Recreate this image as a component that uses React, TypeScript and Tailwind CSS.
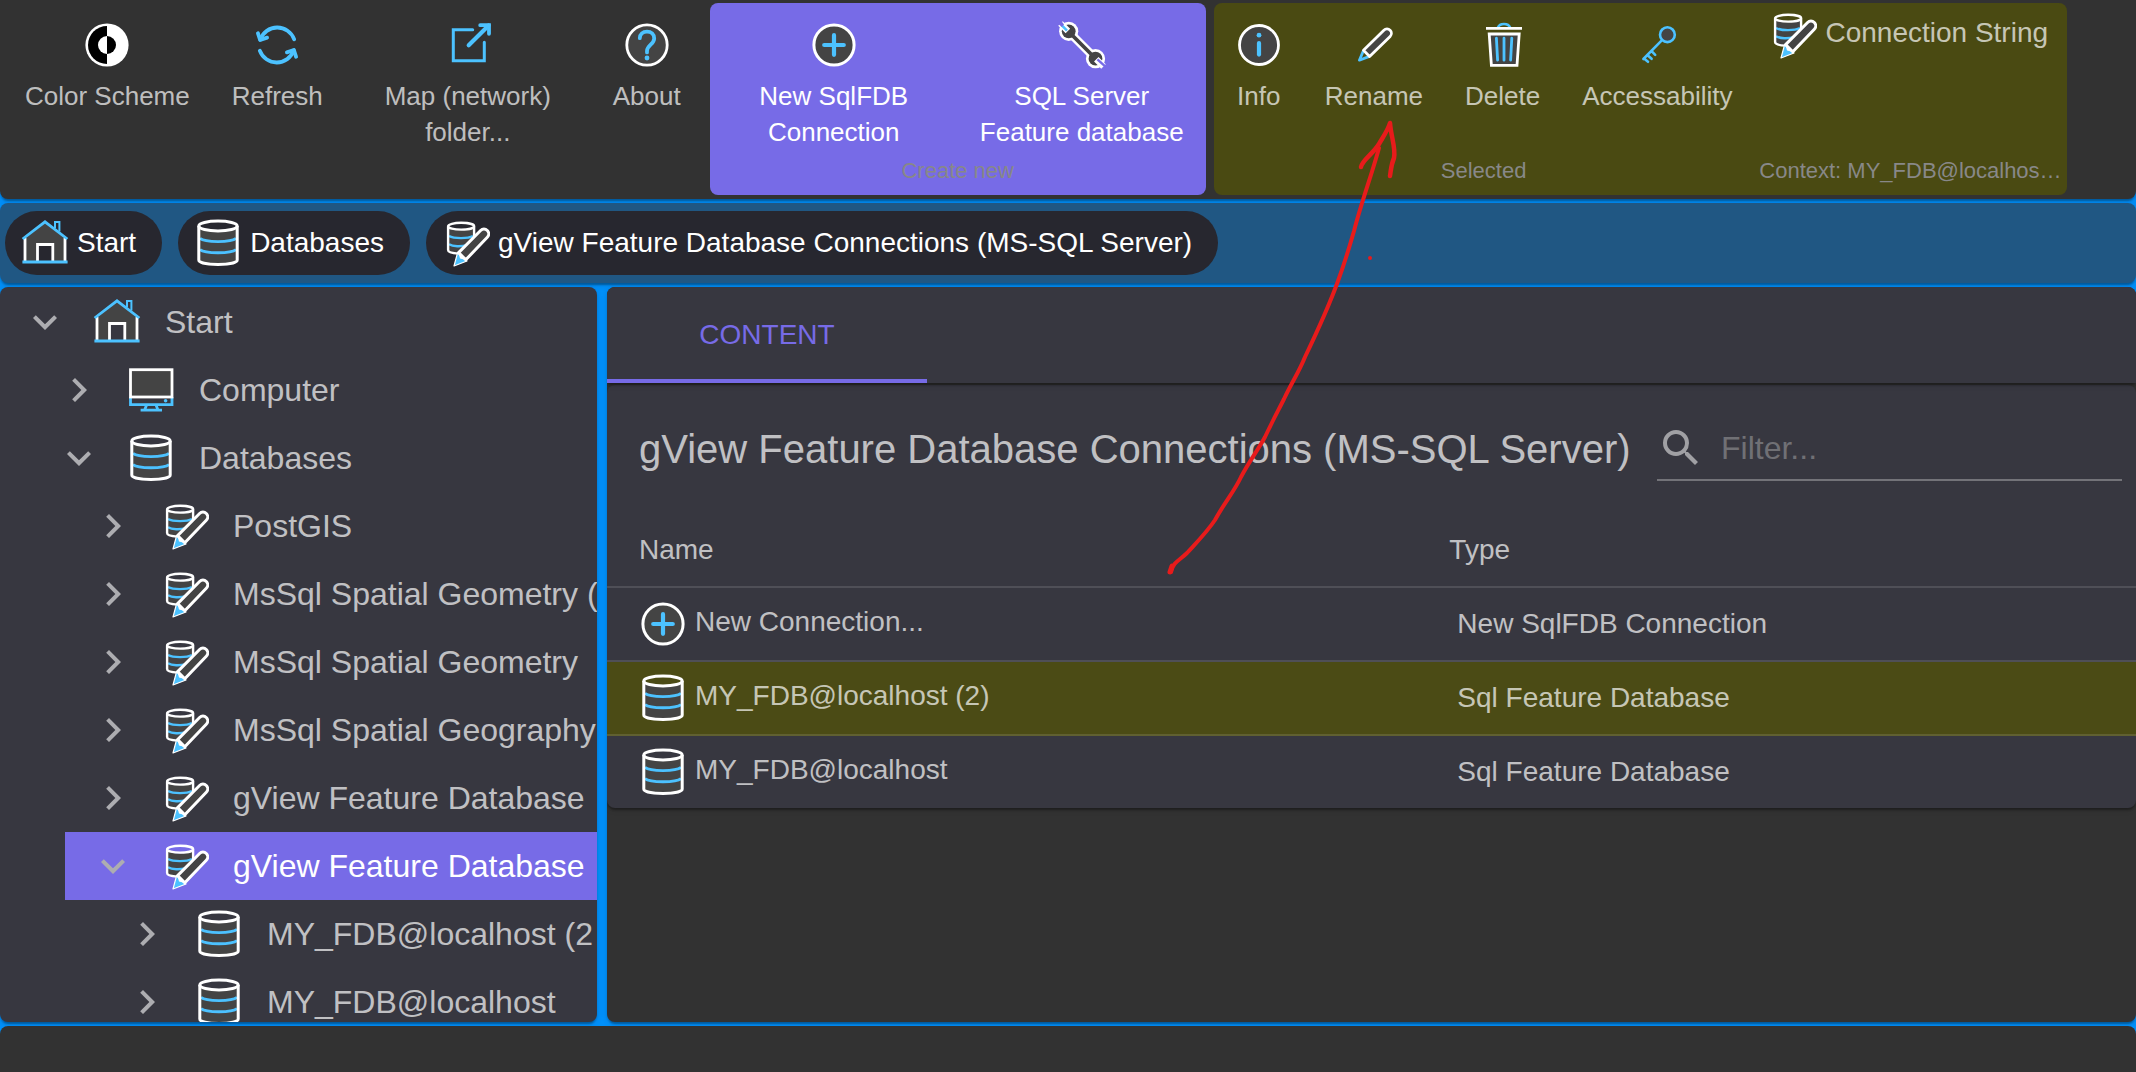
import { useState } from 'react'
import type { ReactNode } from 'react'
import { clsx } from 'clsx'

const paper =
  'shadow-[0_4px_2px_-2px_rgba(0,0,0,0.2),0_2px_2px_rgba(0,0,0,0.14),0_2px_6px_rgba(0,0,0,0.12)]'

const BLUE = '#4cc2ff'
const DARK = '#444444'

function Icon({ children, className }: { children: ReactNode; className?: string }) {
  return (
    <svg
      viewBox="0 0 48 48"
      fill="none"
      aria-hidden="true"
      className={clsx('h-12 w-12 shrink-0', className)}
    >
      {children}
    </svg>
  )
}

function ColorSchemeIcon() {
  return (
    <Icon>
      <circle cx="24" cy="24" r="21.6" fill="#fff" />
      <path d="M24 5a19 19 0 0 0 0 38z" fill="#000" />
      <path d="M24 15a9 9 0 0 0 0 18z" fill="#fff" />
      <path d="M24 15a9 9 0 0 1 0 18z" fill="#000" />
    </Icon>
  )
}

function RefreshIcon() {
  return (
    <Icon>
      <g stroke={BLUE} strokeWidth="3.8" strokeLinecap="round" strokeLinejoin="round">
        <path d="M41.2 18.3A18 18 0 0 0 7.3 18.6" />
        <path d="M4.9 12.2l2.2 6.8 7-2.4" />
        <path d="M6.8 29.7A18 18 0 0 0 40.7 29.4" />
        <path d="M43.1 35.8l-2.2-6.8-7 2.4" />
      </g>
    </Icon>
  )
}

function ExternalIcon() {
  return (
    <Icon>
      <g stroke={BLUE}>
        <path d="M28.7 8.7H9.3v31h31V21.3" strokeWidth="3" strokeLinecap="round" />
        <path d="M24.7 24.3L44.6 4.4" strokeWidth="4.2" strokeLinecap="round" />
        <path d="M36.2 4.2H45V12.8" strokeWidth="3.8" strokeLinecap="round" />
      </g>
    </Icon>
  )
}

function AboutIcon() {
  return (
    <Icon>
      <circle cx="24" cy="24" r="20.2" fill={DARK} stroke="#fff" strokeWidth="2.8" />
      <path
        d="M16.8 17.2c0-4.2 3.1-6.6 7.2-6.6s7.2 2.6 7.2 6.8c0 5.8-7.2 6.6-7.2 12.6v1.4"
        stroke={BLUE}
        strokeWidth="3.8"
        strokeLinecap="round"
      />
      <circle cx="24" cy="37" r="2.4" fill={BLUE} />
    </Icon>
  )
}

function PlusIcon({ className }: { className?: string }) {
  return (
    <Icon className={className}>
      <circle cx="24" cy="24" r="20.1" fill={DARK} stroke="#fff" strokeWidth="3" />
      <path d="M24 14.2v19.6M14.2 24h19.6" stroke={BLUE} strokeWidth="4.2" strokeLinecap="round" />
    </Icon>
  )
}

function WrenchIcon() {
  return (
    <Icon>
      <path d="M11 11L37 37" stroke="#fff" strokeWidth="8.4" />
      <circle cx="10.7" cy="10.3" r="9.6" fill="#fff" />
      <circle cx="37.5" cy="37.7" r="9.6" fill="#fff" />
      <circle cx="10.7" cy="10.3" r="6.9" fill={DARK} />
      <circle cx="37.5" cy="37.7" r="6.9" fill={DARK} />
      <path d="M12 12L36 36" stroke={DARK} strokeWidth="3.8" />
      <path d="M2.5 2.5l7.4 7.4M45.5 45.5l-7.2-7.2" stroke="#fff" strokeWidth="6.4" />
      <path d="M3.6 4.2l5.4 5.4" stroke={BLUE} strokeWidth="2.6" />
      <path d="M0 2.8L3.6 .2 6 3.6 3.8 6z" fill="#776be7" />
      <path d="M39.4 38.4L48 46" stroke="#776be7" strokeWidth="2.4" />
    </Icon>
  )
}

function InfoIcon() {
  return (
    <Icon>
      <circle cx="24" cy="24" r="19.5" fill={DARK} stroke="#fff" strokeWidth="2.8" />
      <circle cx="24" cy="14.2" r="2.4" fill={BLUE} />
      <path d="M24 22v11.6" stroke={BLUE} strokeWidth="4.2" strokeLinecap="round" />
    </Icon>
  )
}

function PencilIcon() {
  return (
    <Icon>
      <path
        d="M13.6 29.2L9.4 39.2 19.4 35.4"
        stroke={BLUE}
        strokeWidth="2.8"
        strokeLinejoin="round"
      />
      <path
        d="M13.5 29.2L33.9 9.2a4.3 4.3 0 0 1 6.2 6.2L19.6 35.4z"
        fill={DARK}
        stroke="#fff"
        strokeWidth="2.8"
        strokeLinejoin="round"
      />
    </Icon>
  )
}

function TrashIcon() {
  return (
    <Icon>
      <path d="M19 6.4c1.6-4.6 10.4-4.6 12 0" stroke={BLUE} strokeWidth="2.6" />
      <path d="M7 7.4H43" stroke="#fff" strokeWidth="2.8" />
      <path d="M10.2 13H40.2L38 44.3H12.4z" fill={DARK} stroke="#fff" strokeWidth="2.8" />
      <path
        d="M17.4 17.2l1.2 22M25 17.2v22M32.8 17.2l-1.2 22"
        stroke={BLUE}
        strokeWidth="2.8"
        strokeLinecap="round"
      />
    </Icon>
  )
}

function KeyIcon() {
  return (
    <Icon>
      <circle cx="34.4" cy="13.7" r="7.4" fill={DARK} stroke={BLUE} strokeWidth="2.6" />
      <path
        d="M29 19.2L10.4 38M11 37.6l4 3.2M14.6 34.2l4 3.6M18.6 30.2l3.6 3.6"
        stroke={BLUE}
        strokeWidth="2.6"
        strokeLinecap="round"
      />
    </Icon>
  )
}

function HomeIcon() {
  return (
    <Icon>
      <path d="M4 18L24 3 44 18V43H32V25.5H16.5V43H4z" fill={DARK} />
      <path d="M4 19v23M44 19v23M16.5 42V25.5H31.8V42" stroke="#fff" strokeWidth="2.8" />
      <path d="M34 9V3h4.4v9.5" stroke={BLUE} strokeWidth="2" />
      <path d="M1.6 20L24 2.8 46.4 20M1.4 43H46.6" stroke={BLUE} strokeWidth="2.8" />
    </Icon>
  )
}

function ComputerIcon() {
  return (
    <Icon>
      <path d="M3.5 31v7.7H45V31" stroke={BLUE} strokeWidth="2.8" />
      <rect x="3.5" y="3.7" width="41.5" height="27.3" fill={DARK} stroke="#fff" strokeWidth="2.8" />
      <circle cx="38.6" cy="34.8" r="1.8" fill={BLUE} />
      <path d="M19.6 39l-2 5M29 39l2 5M13.6 44.2H35" stroke={BLUE} strokeWidth="2.8" />
    </Icon>
  )
}

function DatabaseIcon({ className }: { className?: string }) {
  return (
    <Icon className={className}>
      <path d="M4.8 6.5C8 12.5 40 12.5 43.2 6.5V41c0 6-38.4 6-38.4 0z" fill={DARK} />
      <path d="M6 19.4c5 4.2 31 4.2 36 0M6 30.6c5 4.2 31 4.2 36 0" stroke={BLUE} strokeWidth="2.8" />
      <ellipse cx="24" cy="7" rx="19.2" ry="4.9" stroke="#fff" strokeWidth="3" />
      <path
        d="M4.8 7v34c0 2.6 8 4.4 19.2 4.4S43.2 43.6 43.2 41V7"
        stroke="#fff"
        strokeWidth="3"
      />
    </Icon>
  )
}

function DatabaseEditIcon({ className }: { className?: string }) {
  return (
    <Icon className={className}>
      <path d="M6.2 8C10 12.5 28 12.5 32 8v14L16 34.5c-6 0-9.8-1.5-9.8-3.5z" fill={DARK} />
      <path d="M7 17c5 2.8 19 2.8 24 0M7 25.2c4 2.4 12 2.6 18 1" stroke={BLUE} strokeWidth="2.4" />
      <ellipse cx="19.1" cy="7.2" rx="13" ry="3.4" stroke="#fff" strokeWidth="2.4" />
      <path d="M6.1 7.5V31c0 2 4.4 3.3 10.4 3.6M32.1 7.5V17" stroke="#fff" strokeWidth="2.4" />
      <path d="M15.6 33.6L12 47 25 42z" fill={BLUE} stroke="#fff" strokeWidth="1.2" strokeLinejoin="round" />
      <path d="M16.5 34l1.5 5.5 6 1.5z" fill="#fff" />
      <path
        d="M16.6 33.6L38.6 11.5a4.7 4.7 0 0 1 6.7 6.7L23.8 40.8z"
        fill={DARK}
        stroke="#fff"
        strokeWidth="3"
        strokeLinejoin="round"
      />
    </Icon>
  )
}

function Chevron({ open }: { open?: boolean }) {
  return (
    <svg viewBox="0 0 24 24" fill="#adadb1" aria-hidden="true" className="h-12 w-12 shrink-0">
      {open ? (
        <path d="M16.59 8.59L12 13.17 7.41 8.59 6 10l6 6 6-6z" />
      ) : (
        <path d="M10 6L8.59 7.41 13.17 12l-4.58 4.59L10 18l6-6z" />
      )}
    </svg>
  )
}

function ToolButton({ icon, label, wide }: { icon: ReactNode; label: string; wide?: boolean }) {
  return (
    <button
      type="button"
      className={clsx(
        'flex shrink-0 cursor-pointer flex-col items-center gap-[9px] px-[21px] pt-[18px] text-[26px] leading-9',
        wide && 'w-[248px]',
      )}
    >
      {icon}
      <span>{label}</span>
    </button>
  )
}

function ToolGroup({ label, children, className }: { label?: string; children: ReactNode; className?: string }) {
  return (
    <div className={clsx('flex h-48 flex-col justify-between pb-2', className)}>
      <div className="flex items-start">{children}</div>
      {label && (
        <div className="truncate px-1 text-center text-[22px] leading-[33px] text-[#888888]">{label}</div>
      )}
    </div>
  )
}

function Toolbar() {
  return (
    <header className={clsx('flex shrink-0 gap-2 rounded-b-lg bg-[#323232] pt-[3px] pb-1 pl-1 text-white/70', paper)}>
      <ToolGroup>
        <ToolButton icon={<ColorSchemeIcon />} label="Color Scheme" />
        <ToolButton icon={<RefreshIcon />} label="Refresh" />
        <ToolButton icon={<ExternalIcon />} label="Map (network) folder..." wide />
        <ToolButton icon={<AboutIcon />} label="About" />
      </ToolGroup>
      <ToolGroup label="Create new" className="rounded-lg bg-[#776be7] text-white">
        <ToolButton icon={<PlusIcon />} label="New SqlFDB Connection" wide />
        <ToolButton icon={<WrenchIcon />} label="SQL Server Feature database" wide />
      </ToolGroup>
      <div className="flex rounded-lg bg-[#4a4a12]">
        <ToolGroup label="Selected">
          <ToolButton icon={<InfoIcon />} label="Info" />
          <ToolButton icon={<PencilIcon />} label="Rename" />
          <ToolButton icon={<TrashIcon />} label="Delete" />
          <ToolButton icon={<KeyIcon />} label="Accessability" />
        </ToolGroup>
        <ToolGroup label="Context: MY_FDB@localhos…" className="w-[314px]">
          <button type="button" className="cursor-pointer px-4 pt-2 text-[28px] leading-10 whitespace-nowrap">
            <DatabaseEditIcon className="mr-2 inline-block align-middle" />
            Connection String
          </button>
        </ToolGroup>
      </div>
    </header>
  )
}

function Crumb({ icon, label }: { icon: ReactNode; label: string }) {
  return (
    <a
      href="#"
      className="flex h-16 items-center gap-2 rounded-full bg-[#27272f] pr-[26px] pl-4 text-[28px] leading-10 whitespace-nowrap text-white"
    >
      {icon}
      {label}
    </a>
  )
}

type Node = {
  label: string
  icon: ReactNode
  open?: boolean
  selected?: boolean
  children?: Node[]
}

const tree: Node[] = [
  {
    label: 'Start',
    icon: <HomeIcon />,
    open: true,
    children: [
      { label: 'Computer', icon: <ComputerIcon /> },
      {
        label: 'Databases',
        icon: <DatabaseIcon />,
        open: true,
        children: [
          { label: 'PostGIS', icon: <DatabaseEditIcon /> },
          { label: 'MsSql Spatial Geometry (', icon: <DatabaseEditIcon /> },
          { label: 'MsSql Spatial Geometry', icon: <DatabaseEditIcon /> },
          { label: 'MsSql Spatial Geography', icon: <DatabaseEditIcon /> },
          { label: 'gView Feature Database', icon: <DatabaseEditIcon /> },
          {
            label: 'gView Feature Database',
            icon: <DatabaseEditIcon />,
            open: true,
            selected: true,
            children: [
              { label: 'MY_FDB@localhost (2', icon: <DatabaseIcon /> },
              { label: 'MY_FDB@localhost', icon: <DatabaseIcon /> },
            ],
          },
        ],
      },
    ],
  },
]

function TreeItem({ node }: { node: Node }) {
  return (
    <li>
      <button
        type="button"
        aria-expanded={!!node.open}
        className={clsx(
          'flex h-[68px] w-full cursor-pointer items-center pl-6 text-[32px] leading-12 whitespace-nowrap',
          node.selected ? 'bg-[#776be7] text-white' : 'text-white/70',
        )}
      >
        <Chevron open={node.open} />
        <span className="flex items-center gap-6 pl-6">
          {node.icon}
          {node.label}
        </span>
      </button>
      {node.children && (
        <ul className="pl-[34px]">
          {node.children.map((child, i) => (
            <TreeItem key={i} node={child} />
          ))}
        </ul>
      )}
    </li>
  )
}

const rows = [
  { name: 'New Connection...', type: 'New SqlFDB Connection', add: true },
  { name: 'MY_FDB@localhost (2)', type: 'Sql Feature Database', selected: true },
  { name: 'MY_FDB@localhost', type: 'Sql Feature Database' },
]

function Content() {
  const [filter, setFilter] = useState('')

  return (
    <main className={clsx('min-w-0 flex-1 overflow-hidden rounded-lg bg-[#323232] text-white/70', paper)}>
      <div role="tablist" className={clsx('relative flex bg-[#373740]', paper)}>
        <button
          type="button"
          role="tab"
          aria-selected="true"
          className="h-24 w-80 cursor-pointer border-b-4 border-[#776be7] pt-1 text-[28px] leading-10 text-[#776be7]"
        >
          CONTENT
        </button>
      </div>
      <section className={clsx('mt-0.5 rounded-lg bg-[#373740]', paper)}>
        <div className="flex h-32 items-center justify-between pr-3.5 pl-8">
          <h1 className="text-[40px] leading-16 whitespace-nowrap">
            gView Feature Database Connections (MS-SQL Server)
          </h1>
          <label className="flex h-16 w-[465px] items-center gap-4 border-b-2 border-white/30">
            <svg viewBox="0 0 24 24" fill="#a0a0a4" aria-hidden="true" className="h-12 w-12 shrink-0">
              <path d="M15.5 14h-.79l-.28-.27A6.471 6.471 0 0 0 16 9.5 6.5 6.5 0 1 0 9.5 16c1.61 0 3.09-.59 4.23-1.57l.27.28v.79l5 4.99L20.49 19l-4.99-5zm-6 0C7.01 14 5 11.99 5 9.5S7.01 5 9.5 5 14 7.01 14 9.5 11.99 14 9.5 14z" />
            </svg>
            <input
              type="text"
              aria-label="Filter"
              placeholder="Filter..."
              value={filter}
              onChange={(e) => setFilter(e.target.value)}
              className="min-w-0 flex-1 bg-transparent text-[32px] leading-12 outline-none placeholder:text-[#707075]"
            />
          </label>
        </div>
        <table className="w-full border-separate border-spacing-0 text-left text-[28px] leading-10">
          <thead>
            <tr className="h-[75px]">
              <th scope="col" className="w-[53%] border-b-2 border-white/12 px-8 font-normal">
                Name
              </th>
              <th scope="col" className="border-b-2 border-white/12 px-8 font-normal">
                Type
              </th>
            </tr>
          </thead>
          <tbody>
            {rows.map((row) => (
              <tr
                key={row.name}
                className={clsx(
                  'h-[74px] *:border-b-2 *:border-white/12 last:h-[72px] last:*:border-b-0',
                  row.selected && 'bg-[#4b4b15]',
                )}
              >
                <td className="px-8">
                  {row.add ? (
                    <PlusIcon className="mr-2 inline-block align-middle" />
                  ) : (
                    <DatabaseIcon className="mr-2 inline-block align-middle" />
                  )}
                  {row.name}
                </td>
                <td className="pr-8 pl-10">{row.type}</td>
              </tr>
            ))}
          </tbody>
        </table>
      </section>
    </main>
  )
}

// Hand drawn pointer from the table up to the Rename tool
function Annotation() {
  return (
    <svg
      viewBox="0 0 2136 1072"
      fill="none"
      stroke="#e81b1b"
      strokeLinecap="round"
      strokeLinejoin="round"
      aria-hidden="true"
      className="pointer-events-none absolute inset-0 h-full w-full"
    >
      <path
        d="M1171 572C1173 562 1180 560 1187 553C1198 541 1207 532 1215 520C1226 500 1234 492 1241 477C1250 460 1258 450 1265 437C1273 420 1278 411 1284 399C1292 382 1299 372 1305 357C1317 332 1329 306 1338 281C1345 262 1350 245 1354 231C1362 200 1372 174 1379 148"
        strokeWidth="4"
      />
      <path
        d="M1361 167C1362 160 1373 154 1379 144C1383 137 1388 130 1390 123C1391 137 1396 148 1394 158C1391 165 1391 170 1390 176"
        strokeWidth="4.5"
      />
      <path d="M1170 572l2-6" strokeWidth="5" />
      <circle cx="1370" cy="258" r="1" strokeWidth="2" />
    </svg>
  )
}

export default function App() {
  return (
    <div className="relative flex h-screen flex-col gap-1 overflow-hidden bg-[#0090fa] font-['Liberation_Sans',Arial,sans-serif]">
      <Toolbar />
      <nav
        aria-label="Breadcrumb"
        className={clsx('flex h-20 shrink-0 items-center gap-4 rounded-lg bg-[#205783] px-[5px]', paper)}
      >
        <Crumb icon={<HomeIcon />} label="Start" />
        <Crumb icon={<DatabaseIcon />} label="Databases" />
        <Crumb icon={<DatabaseEditIcon />} label="gView Feature Database Connections (MS-SQL Server)" />
      </nav>
      <div className="flex min-h-0 flex-1 gap-2.5">
        <aside className={clsx('w-[597px] shrink-0 overflow-hidden rounded-lg bg-[#373740]', paper)}>
          <ul className="-ml-[3px] pt-px">
            {tree.map((node) => (
              <TreeItem key={node.label} node={node} />
            ))}
          </ul>
        </aside>
        <Content />
      </div>
      <footer className="h-[46px] shrink-0 rounded-t-lg bg-[#323232]" />
      <Annotation />
    </div>
  )
}
